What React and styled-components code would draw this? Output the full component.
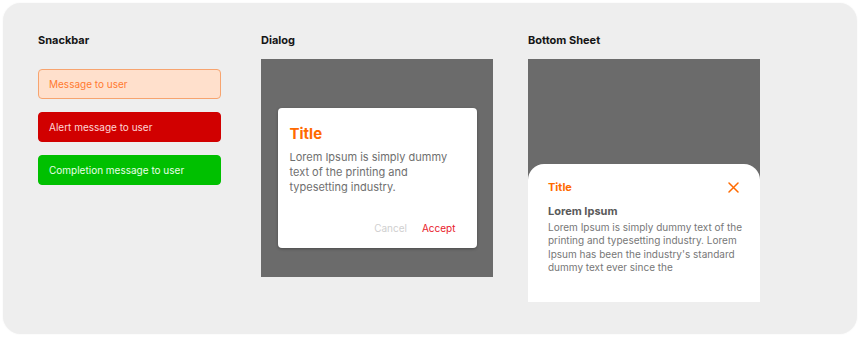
import styled, { createGlobalStyle } from 'styled-components';

const GlobalStyle = createGlobalStyle`
  html, body {
    margin: 0;
    padding: 0;
    background: #ffffff;
    font-family: Inter, "Noto Sans", sans-serif;
  }
`;

const Board = styled.div`
  box-sizing: border-box;
  margin: 3px;
  width: 854px;
  height: 331px;
  background: #eeeeee;
  border-radius: 18px;
  box-shadow: 0 0 2px rgba(0, 0, 0, 0.06);
  padding: 30px 0 0 35px;
  display: grid;
  grid-template-columns: 223px 267px 232px;
  align-items: start;
`;

const Column = styled.div`
  display: flex;
  flex-direction: column;
`;

const Heading = styled.div`
  font-size: 11px;
  font-weight: 700;
  color: #151515;
  line-height: 14px;
  height: 14px;
  margin-bottom: 12px;
`;

const SnackList = styled.div`
  display: flex;
  flex-direction: column;
  gap: 13px;
  margin-top: 10px;
`;

const tones = {
  info: { bg: '#ffe0cc', border: '#f7a46f', color: '#ff7a30' },
  alert: { bg: '#d10000', border: '#d10000', color: '#ffd6d6' },
  done: { bg: '#00c000', border: '#00c000', color: '#e8ffe8' },
};

const Snack = styled.div`
  box-sizing: border-box;
  width: 183px;
  height: 30px;
  border-radius: 4px;
  border: 1px solid ${(p) => tones[p.tone].border};
  background: ${(p) => tones[p.tone].bg};
  color: ${(p) => tones[p.tone].color};
  font-size: 10px;
  display: flex;
  align-items: center;
  padding-left: 10px;
`;

const Frame = styled.div`
  width: 232px;
  height: ${(p) => p.h}px;
  background: #6b6b6b;
  display: flex;
  flex-direction: column;
  align-items: ${(p) => (p.stretch ? 'stretch' : 'center')};
  box-sizing: border-box;
  padding-top: ${(p) => p.top || 0}px;
`;

const DialogCard = styled.div`
  box-sizing: border-box;
  width: 199px;
  height: 140px;
  background: #ffffff;
  border-radius: 4px;
  box-shadow: 0 1px 3px rgba(0, 0, 0, 0.3);
  padding: 16px 21px 0 12px;
  display: flex;
  flex-direction: column;
`;

const DialogTitle = styled.div`
  font-size: 15px;
  font-weight: 700;
  color: #ff6a00;
  line-height: 20px;
  margin-bottom: 6px;
`;

const DialogBody = styled.div`
  font-size: 11px;
  color: #6f6f6f;
  line-height: 14.8px;
`;

const Actions = styled.div`
  margin-top: auto;
  margin-bottom: 13px;
  display: flex;
  justify-content: flex-end;
  gap: 15px;
`;

const ActionButton = styled.span`
  font-size: 10px;
  line-height: 13px;
  color: ${(p) => (p.primary ? '#e8192c' : '#cfcfcf')};
`;

const Sheet = styled.div`
  margin-top: auto;
  height: 138px;
  box-sizing: border-box;
  background: #ffffff;
  border-radius: 16px 16px 0 0;
  padding: 16px 21px 0 20px;
`;

const SheetHeader = styled.div`
  display: flex;
  justify-content: space-between;
  align-items: center;
  height: 14px;
  margin-bottom: 10px;
`;

const SheetTitle = styled.div`
  font-size: 11px;
  font-weight: 700;
  color: #ff6a00;
`;

const SheetSubtitle = styled.div`
  font-size: 11px;
  font-weight: 700;
  color: #5a5a5a;
  line-height: 14px;
  margin-bottom: 3px;
`;

const SheetBody = styled.div`
  font-size: 10px;
  color: #777777;
  line-height: 13.4px;
  margin-right: -8px;
`;

const CloseIcon = () => (
  <svg width="11" height="11" viewBox="0 0 11 11">
    <path d="M1 1 L10 10 M10 1 L1 10" stroke="#ff6a00" strokeWidth="1.5" strokeLinecap="round" />
  </svg>
);

export default function App() {
  return (
    <>
      <GlobalStyle />
      <Board>
        <Column>
          <Heading>Snackbar</Heading>
          <SnackList>
            <Snack tone="info">Message to user</Snack>
            <Snack tone="alert">Alert message to user</Snack>
            <Snack tone="done">Completion message to user</Snack>
          </SnackList>
        </Column>
        <Column>
          <Heading>Dialog</Heading>
          <Frame h={218} top={49}>
            <DialogCard>
              <DialogTitle>Title</DialogTitle>
              <DialogBody>
                Lorem Ipsum is simply dummy text of the printing and typesetting industry.
              </DialogBody>
              <Actions>
                <ActionButton>Cancel</ActionButton>
                <ActionButton primary>Accept</ActionButton>
              </Actions>
            </DialogCard>
          </Frame>
        </Column>
        <Column>
          <Heading>Bottom Sheet</Heading>
          <Frame h={243} stretch>
            <Sheet>
              <SheetHeader>
                <SheetTitle>Title</SheetTitle>
                <CloseIcon />
              </SheetHeader>
              <SheetSubtitle>Lorem Ipsum</SheetSubtitle>
              <SheetBody>
                Lorem Ipsum is simply dummy text of the printing and typesetting industry. Lorem
                Ipsum has been the industry's standard dummy text ever since the
              </SheetBody>
            </Sheet>
          </Frame>
        </Column>
      </Board>
    </>
  );
}
